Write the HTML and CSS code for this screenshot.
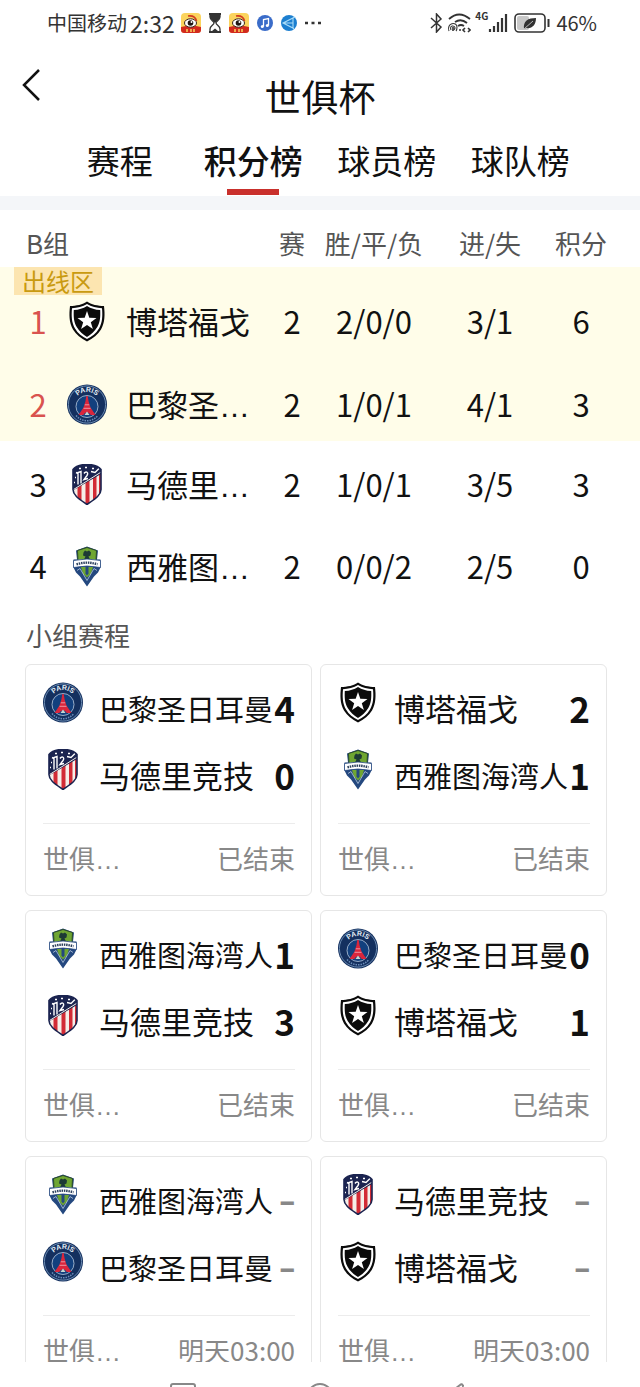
FILE: index.html
```html
<!DOCTYPE html>
<html lang="zh-CN">
<head>
  <meta charset="UTF-8">
  <meta name="viewport" content="width=device-width, initial-scale=1">
  <title>世俱杯</title>
  <link rel="stylesheet" href="styles.css">
</head>
<body>

<!-- Team crests and status icons -->
<svg class="sprite" aria-hidden="true">
  <symbol id="botafogo" viewBox="0 0 40 40">
    <path d="M20 0C16 3 9 4.500 3 4.500C2 13 2 21 6 28C9 33 14 37 20 40C26 37 31 33 34 28C38 21 38 13 37 4.500C31 4.500 24 3 20 0Z" fill="#0b0b0b"/>
    <path d="M20 2.500C16 5 10 6.500 5 6.700C4.300 14 4.500 21 8 27C11 32 15 35 20 37.500C25 35 29 32 32 27C35.500 21 35.700 14 35 6.700C30 6.500 24 5 20 2.500Z" fill="#fff"/>
    <path d="M20 4.500C16 7 12 8.200 6.800 8.600C6.500 15 6.700 20.500 9.700 25.500C12.300 30 16 33 20 35.500C24 33 27.700 30 30.300 25.500C33.300 20.500 33.500 15 33.200 8.600C28 8.200 24 7 20 4.500Z" fill="#0b0b0b"/>
    <path d="M20 9.500L22.300 16.300L29.500 16.400L23.800 20.700L25.900 27.500L20 23.400L14.100 27.500L16.200 20.700L10.500 16.400L17.700 16.300Z" fill="#fff"/>
  </symbol>
  <symbol id="psg" viewBox="0 0 40 40">
    <circle cx="20" cy="20" r="20" fill="#14305f"/>
    <circle cx="20" cy="20" r="18.600" fill="none" stroke="#7fa0c4" stroke-width=".8"/>
    <circle cx="20" cy="22" r="11" fill="#12407e" stroke="#b8c8dc" stroke-width=".8"/>
    <path id="psg-arc" d="M7.500 19A12.500 11.500 0 0 1 32.500 19" fill="none"/>
    <text class="psg-name"><textPath href="#psg-arc" startOffset="50%" text-anchor="middle">PARIS</textPath></text>
    <path d="M19.300 11.500H20.700L21.600 17L23.500 23L28.500 30.500H23.500C23 27 17 27 16.500 30.500H11.500L16.500 23L18.400 17Z" fill="#d9263c"/>
    <path d="M17.800 20.300H22.200M16.500 23.800H23.500" stroke="#f2c6cf" stroke-width=".7"/>
    <path d="M17.500 30.500L20 27L22.500 30.500Z" fill="#c7d6d0"/>
    <path d="M9 31C15 38 25 38 31 31" fill="none" stroke="#6c8db9" stroke-width="1.500" stroke-dasharray="1.500 1"/>
  </symbol>
  <symbol id="atletico" viewBox="0 0 40 40">
    <clipPath id="atm-shape"><path d="M6 5C9 1 14 0 20 0S31 1 34 5V25C34 31 27 35 20 40C13 35 6 31 6 25Z"/></clipPath>
    <g clip-path="url(#atm-shape)">
      <path d="M0 0H40V40H0Z" fill="#f5eee8"/>
      <path d="M10.500 18H14.500V40H10.500ZM18.500 10H22.500V40H18.500ZM26 8H29.500V40H26ZM32 5H36V40H32Z" fill="#d22b35"/>
      <path d="M0 0H40V6L6 26H0Z" fill="#1b2450"/>
      <path d="M5 26L35 7" stroke="#f5eee8" stroke-width="1"/>
      <path d="M11 20V8L14 7V19M11 9L9 8M17 9C19 6 22 8 20 11L17 15L21 14M24 7L28 8L32 4" fill="none" stroke="#fff" stroke-width="1.400"/>
      <path d="M18 3H20M25 4H27M12 4H14M8 13H9M7 18H8" stroke="#fff" stroke-width="1.500"/>
    </g>
    <path d="M6 5C9 1 14 0 20 0S31 1 34 5V25C34 31 27 35 20 40C13 35 6 31 6 25Z" fill="none" stroke="#1b2450" stroke-width="1.600"/>
  </symbol>
  <symbol id="sounders" viewBox="0 0 40 40">
    <path d="M20 0L31 4L30 13H33.500V21L31 26L27 30L20 40L13 30L9 26L6.500 21V13H10L9 4Z" fill="#24487f"/>
    <path d="M20 1L29.500 4L29 14H11L10.500 4Z" fill="#6fa632" stroke="#2b4a2a" stroke-width="1"/>
    <path d="M18 4L20 5L22 4L24 6L23.500 9L21.500 10L23 13H17L18.500 10L16 9L16.500 6Z" fill="#1d3a35"/>
    <path d="M6.500 14Q20 11 33.500 14V21Q20 18 6.500 21Z" fill="#fff" stroke="#24487f" stroke-width=".8"/>
    <path d="M9.500 17.800Q20 14.500 30.500 17.800" fill="none" stroke="#2b3f5c" stroke-width="2.400" stroke-dasharray="1.500 .8"/>
    <path d="M14 20.500L26 20.500L24 27L20 31L16 27Z" fill="#6fa632"/>
    <path d="M18.500 20H21.500V27L20 29L18.500 27Z" fill="#24487f"/>
    <path d="M10 24L13 22L20 34L27 22L30 24" fill="none" stroke="#b8c9dd" stroke-width=".8"/>
  </symbol>
  <symbol id="weibo" viewBox="0 0 20 20">
    <rect width="20" height="20" rx="4" fill="#fbd45e"/>
    <path d="M0 14Q10 11 20 14V17Q20 20 17 20H3Q0 20 0 17Z" fill="#d22a1d"/>
    <ellipse cx="9.500" cy="10" rx="6" ry="4.200" fill="#fff" stroke="#3a2419" stroke-width="1"/>
    <circle cx="9.500" cy="10" r="2.800" fill="#1e1512"/>
    <circle cx="10.500" cy="9" r="1" fill="#fff"/>
    <path d="M7 3Q14 2 15.500 8" fill="none" stroke="#d13c1f" stroke-width="1.700"/>
    <path d="M6 16V19M10 16V19M13 16V19" stroke="#fbd45e" stroke-width="1.500"/>
  </symbol>
</svg>

<header class="statusbar">
  <div class="status-group">
    <span class="carrier">中国移动</span>
    <span class="clock">2:32</span>
    <svg class="status-icon app" width="20" height="20"><use href="#weibo"/></svg>
    <svg class="status-icon app" width="16" height="20" viewBox="0 0 16 20">
      <path d="M2 1H14M2 19H14" stroke="#333" stroke-width="1.800"/>
      <path d="M3 1V4C3 7 7 8 7 10S3 13 3 16V19M13 1V4C13 7 9 8 9 10S13 13 13 16V19" fill="none" stroke="#333" stroke-width="1.300"/>
      <path d="M3 2H13V5L8 10L3 5ZM5 18L8 15.500L11 18Z" fill="#333"/>
    </svg>
    <svg class="status-icon app" width="20" height="20"><use href="#weibo"/></svg>
    <svg class="status-icon" width="16" height="16" viewBox="0 0 16 16">
      <circle cx="8" cy="8" r="8" fill="#3a6cc9"/>
      <path d="M6.500 11.500V4.500L11.500 3.500V10.500" fill="none" stroke="#fff" stroke-width="1.300"/>
      <circle cx="5.300" cy="11.500" r="1.500" fill="#fff"/><circle cx="10.300" cy="10.500" r="1.500" fill="#fff"/>
    </svg>
    <svg class="status-icon" width="16" height="16" viewBox="0 0 16 16">
      <circle cx="8" cy="8" r="8" fill="#1c7fd0"/>
      <path d="M2 8L12 3V13ZM2 8H12M12 3L14 2M12 13L13 14" fill="none" stroke="#a9dcf8" stroke-width="1.100"/>
    </svg>
    <svg class="status-icon" width="16" height="4" viewBox="0 0 16 4"><path d="M0 2H3M6.500 2H9.500M13 2H16" stroke="#333" stroke-width="2.500"/></svg>
  </div>
  <div class="status-group">
    <svg width="13" height="20" viewBox="0 0 13 20"><path d="M1 5L11 14L6.500 19V1L11 6L1 15" fill="none" stroke="#333" stroke-width="1.500"/></svg>
    <svg class="wifi" width="24" height="20" viewBox="0 0 24 20">
      <path d="M2 6Q12 -3 23 6M8 9Q14 5 20 10M11 13Q14 11 17 13" fill="none" stroke="#333" stroke-width="1.800"/>
      <path d="M2 18C-1 10 10 8 10 14Q10 17 9 18M4 17C2 12 8 12 8 15L7 17" fill="none" stroke="#333" stroke-width="1.100"/>
      <path d="M6 14V18M12 17H14M18 15L16 17L18 19M21 15L23 17L21 19" fill="none" stroke="#333" stroke-width="1.600"/>
    </svg>
    <span class="network">4G</span>
    <svg class="signal" width="20" height="20" viewBox="0 0 20 20"><path d="M2 16V19M6 13V19M10 9V19M14 5V19M18 1V19" stroke="#333" stroke-width="2.200"/></svg>
    <svg class="battery" width="36" height="20" viewBox="0 0 36 20">
      <rect x="1" y="1" width="30" height="18" rx="4" fill="#fff" stroke="#333" stroke-width="1.600"/>
      <rect x="3" y="3" width="12" height="14" rx="2" fill="#c8c8c8"/>
      <path d="M10 16C9 8 14 5 22 5C22 12 18 16 12 15Z" fill="#333"/>
      <path d="M10 16L19 8" stroke="#bbb" stroke-width="1"/>
      <path d="M34.500 6V14" stroke="#333" stroke-width="2"/>
    </svg>
    <span class="percent">46%</span>
  </div>
</header>

<div class="titlebar">
  <button class="back" type="button" aria-label="返回">
    <svg width="20" height="34" viewBox="0 0 20 34"><path d="M17 2L2 17L17 32" fill="none" stroke="#111" stroke-width="2.500"/></svg>
  </button>
  <h1>世俱杯</h1>
</div>

<nav class="tabs">
  <button type="button">赛程</button>
  <button type="button" class="active">积分榜</button>
  <button type="button">球员榜</button>
  <button type="button">球队榜</button>
</nav>

<main>
  <table class="standings">
    <colgroup>
      <col class="col-rank"><col class="col-crest"><col>
      <col class="col-played"><col class="col-record"><col class="col-goals"><col class="col-points">
    </colgroup>
    <thead>
      <tr>
        <th class="group" colspan="3">B组</th>
        <th>赛</th>
        <th>胜/平/负</th>
        <th>进/失</th>
        <th class="points">积分</th>
      </tr>
    </thead>
    <tbody class="qualified">
      <tr>
        <td class="rank"><span class="zone-tag">出线区</span>1</td>
        <td><svg class="crest"><use href="#botafogo"/></svg></td>
        <td class="team">博塔福戈</td>
        <td>2</td><td>2/0/0</td><td>3/1</td><td class="points">6</td>
      </tr>
      <tr>
        <td class="rank">2</td>
        <td><svg class="crest"><use href="#psg"/></svg></td>
        <td class="team">巴黎圣<span class="dots">…</span></td>
        <td>2</td><td>1/0/1</td><td>4/1</td><td class="points">3</td>
      </tr>
    </tbody>
    <tbody>
      <tr>
        <td class="rank">3</td>
        <td><svg class="crest"><use href="#atletico"/></svg></td>
        <td class="team">马德里<span class="dots">…</span></td>
        <td>2</td><td>1/0/1</td><td>3/5</td><td class="points">3</td>
      </tr>
      <tr>
        <td class="rank">4</td>
        <td><svg class="crest"><use href="#sounders"/></svg></td>
        <td class="team">西雅图<span class="dots">…</span></td>
        <td>2</td><td>0/0/2</td><td>2/5</td><td class="points">0</td>
      </tr>
    </tbody>
  </table>

  <h2>小组赛程</h2>

  <section class="matches">
    <article class="match">
      <div class="side"><svg class="crest"><use href="#psg"/></svg><span class="name long">巴黎圣日耳曼</span><b class="score">4</b></div>
      <div class="side"><svg class="crest"><use href="#atletico"/></svg><span class="name">马德里竞技</span><b class="score">0</b></div>
      <footer><span>世俱<span class="dots">…</span></span><span>已结束</span></footer>
    </article>
    <article class="match">
      <div class="side"><svg class="crest"><use href="#botafogo"/></svg><span class="name">博塔福戈</span><b class="score">2</b></div>
      <div class="side"><svg class="crest"><use href="#sounders"/></svg><span class="name long">西雅图海湾人</span><b class="score">1</b></div>
      <footer><span>世俱<span class="dots">…</span></span><span>已结束</span></footer>
    </article>
    <article class="match">
      <div class="side"><svg class="crest"><use href="#sounders"/></svg><span class="name long">西雅图海湾人</span><b class="score">1</b></div>
      <div class="side"><svg class="crest"><use href="#atletico"/></svg><span class="name">马德里竞技</span><b class="score">3</b></div>
      <footer><span>世俱<span class="dots">…</span></span><span>已结束</span></footer>
    </article>
    <article class="match">
      <div class="side"><svg class="crest"><use href="#psg"/></svg><span class="name long">巴黎圣日耳曼</span><b class="score">0</b></div>
      <div class="side"><svg class="crest"><use href="#botafogo"/></svg><span class="name">博塔福戈</span><b class="score">1</b></div>
      <footer><span>世俱<span class="dots">…</span></span><span>已结束</span></footer>
    </article>
    <article class="match">
      <div class="side"><svg class="crest"><use href="#sounders"/></svg><span class="name long">西雅图海湾人</span><b class="score pending">–</b></div>
      <div class="side"><svg class="crest"><use href="#psg"/></svg><span class="name long">巴黎圣日耳曼</span><b class="score pending">–</b></div>
      <footer><span>世俱<span class="dots">…</span></span><span>明天03:00</span></footer>
    </article>
    <article class="match">
      <div class="side"><svg class="crest"><use href="#atletico"/></svg><span class="name">马德里竞技</span><b class="score pending">–</b></div>
      <div class="side"><svg class="crest"><use href="#botafogo"/></svg><span class="name">博塔福戈</span><b class="score pending">–</b></div>
      <footer><span>世俱<span class="dots">…</span></span><span>明天03:00</span></footer>
    </article>
  </section>
</main>

<!-- Android navigation keys -->
<div class="navkeys">
  <svg width="26" height="26" viewBox="0 0 26 26"><rect x="1" y="1" width="24" height="24" rx="2"/></svg>
  <svg width="26" height="26" viewBox="0 0 26 26"><circle cx="13" cy="13" r="12"/></svg>
  <svg width="26" height="26" viewBox="0 0 26 26"><path d="M19 2V24L2 13L16 2Q18 0 19 3Z"/></svg>
</div>

</body>
</html>
```
FILE: styles.css
```css
* {
  box-sizing: border-box;
}

body {
  margin: 0;
  height: 100vh;
  display: flex;
  flex-direction: column;
  background: #fff;
  color: #111;
  font-family: "Noto Sans CJK SC", sans-serif;
}

button {
  border: none;
  background: none;
  padding: 0;
  color: inherit;
  font-family: inherit;
  cursor: pointer;
}

.sprite {
  position: absolute;
  width: 0;
  height: 0;
}

.psg-name {
  font-family: "Liberation Sans", sans-serif;
  font-size: 7px;
  font-weight: bold;
  fill: #e4edf5;
}

/* Keeps the ellipsis on the baseline */
.dots {
  font-family: "Liberation Sans", sans-serif;
  line-height: 1;
}

/* Status bar */
.statusbar {
  flex: none;
  height: 46px;
  padding: 0 43px 0 47px;
  display: flex;
  justify-content: space-between;
  align-items: center;
  color: #333;
  line-height: 44px;
}

.status-group {
  display: flex;
  align-items: center;
}

.carrier {
  font-size: 20px;
}

.clock {
  font-size: 23px;
  margin-left: 3px;
}

.status-icon {
  margin-left: 8px;
}

.status-icon.app {
  margin-left: 6px;
}

.wifi {
  margin-left: 4px;
}

.network {
  align-self: flex-start;
  margin: 8px 0 0 4px;
  font-size: 10px;
  font-weight: bold;
  line-height: 14px;
}

.battery {
  margin: 0 6px;
}

.percent {
  font-size: 20px;
}

/* Title and tabs */
.titlebar {
  flex: none;
  display: grid;
  grid-template-columns: 60px 1fr 60px;
  height: 84px;
  padding-top: 18px;
}

.back {
  align-self: start;
  padding: 4px 0 0 22px;
  text-align: left;
  line-height: 0;
}

h1 {
  margin: 0;
  font-size: 37px;
  font-weight: 400;
  line-height: 64px;
  text-align: center;
}

.tabs {
  flex: none;
  display: grid;
  grid-template-columns: repeat(4, 1fr);
  padding: 0 53px 1px;
}

.tabs button {
  position: relative;
  height: 65px;
  padding-bottom: 5px;
  font-size: 33px;
  line-height: 60px;
  white-space: nowrap;
}

.tabs .active {
  font-weight: 500;
}

.tabs .active::after {
  content: "";
  position: absolute;
  left: 50%;
  bottom: 0;
  width: 52px;
  height: 6px;
  margin-left: -26px;
  background: #c9302c;
}

main {
  flex: 1;
  min-height: 0;
  overflow: hidden;
  border-top: 14px solid #f4f6f9;
}

/* Group standings */
.standings {
  width: 100%;
  table-layout: fixed;
  border-collapse: collapse;
}

.col-rank { width: 60px; }
.col-crest { width: 54px; }
.col-played { width: 60px; }
.col-record { width: 104px; }
.col-goals { width: 128px; }
.col-points { width: 86px; }

.standings th {
  height: 57px;
  padding: 8px 0 0;
  color: #555;
  font-size: 26px;
  font-weight: 400;
  line-height: 36px;
  white-space: nowrap;
}

.standings .group {
  padding-left: 26px;
  text-align: left;
}

.standings td {
  height: 82px;
  padding: 4px 0 0;
  font-size: 31px;
  line-height: 40px;
  text-align: center;
}

.standings .points {
  padding-right: 32px;
}

.standings .rank {
  padding-left: 16px;
}

.standings .team {
  padding-left: 12px;
  text-align: left;
  white-space: nowrap;
}

.qualified {
  background: #fffde9;
}

.qualified .rank {
  position: relative;
  color: #d9534f;
}

.qualified tr:first-child td {
  height: 96px;
  padding-top: 12px;
}

.qualified tr:last-child td {
  height: 78px;
}

.zone-tag {
  position: absolute;
  top: 0;
  left: 14px;
  padding: 0 8px;
  background: #fce5b0;
  color: #c99a10;
  font-size: 24px;
  line-height: 28px;
  white-space: nowrap;
}

.crest {
  display: block;
  width: 40px;
  height: 41px;
  margin: 0 auto;
}

h2 {
  margin: 0;
  padding-left: 26px;
  color: #555;
  font-size: 26px;
  font-weight: 400;
  line-height: 59px;
}

/* Match cards */
.matches {
  display: grid;
  grid-template-columns: 1fr 1fr;
  gap: 14px 8px;
  padding: 0 33px 14px 25px;
}

.match {
  min-width: 0;
  padding: 9px 16px 0 17px;
  border: 1px solid #e6e6e6;
  border-radius: 6px;
}

.side {
  display: flex;
  align-items: center;
  height: 67px;
}

.side .crest {
  flex: none;
  margin: 0 16px 10px 0;
}

.name {
  flex: 1;
  font-size: 31px;
  line-height: 44px;
  white-space: nowrap;
}

.name.long {
  font-size: 29px;
}

.score {
  font-size: 35px;
  font-weight: 700;
  line-height: 44px;
}

.score.pending {
  color: #888;
  font-family: "Noto Sans", sans-serif;
  font-size: 31px;
}

.match footer {
  display: flex;
  justify-content: space-between;
  margin-top: 15px;
  padding-bottom: 4px;
  border-top: 1px solid #ececec;
  color: #888;
  font-size: 26px;
  line-height: 67px;
}

.navkeys {
  flex: none;
  display: flex;
  justify-content: center;
  gap: 111px;
  height: 25px;
  padding-top: 21px;
  overflow: hidden;
}

.navkeys svg {
  flex: none;
  fill: none;
  stroke: #888;
  stroke-width: 2;
}
```
